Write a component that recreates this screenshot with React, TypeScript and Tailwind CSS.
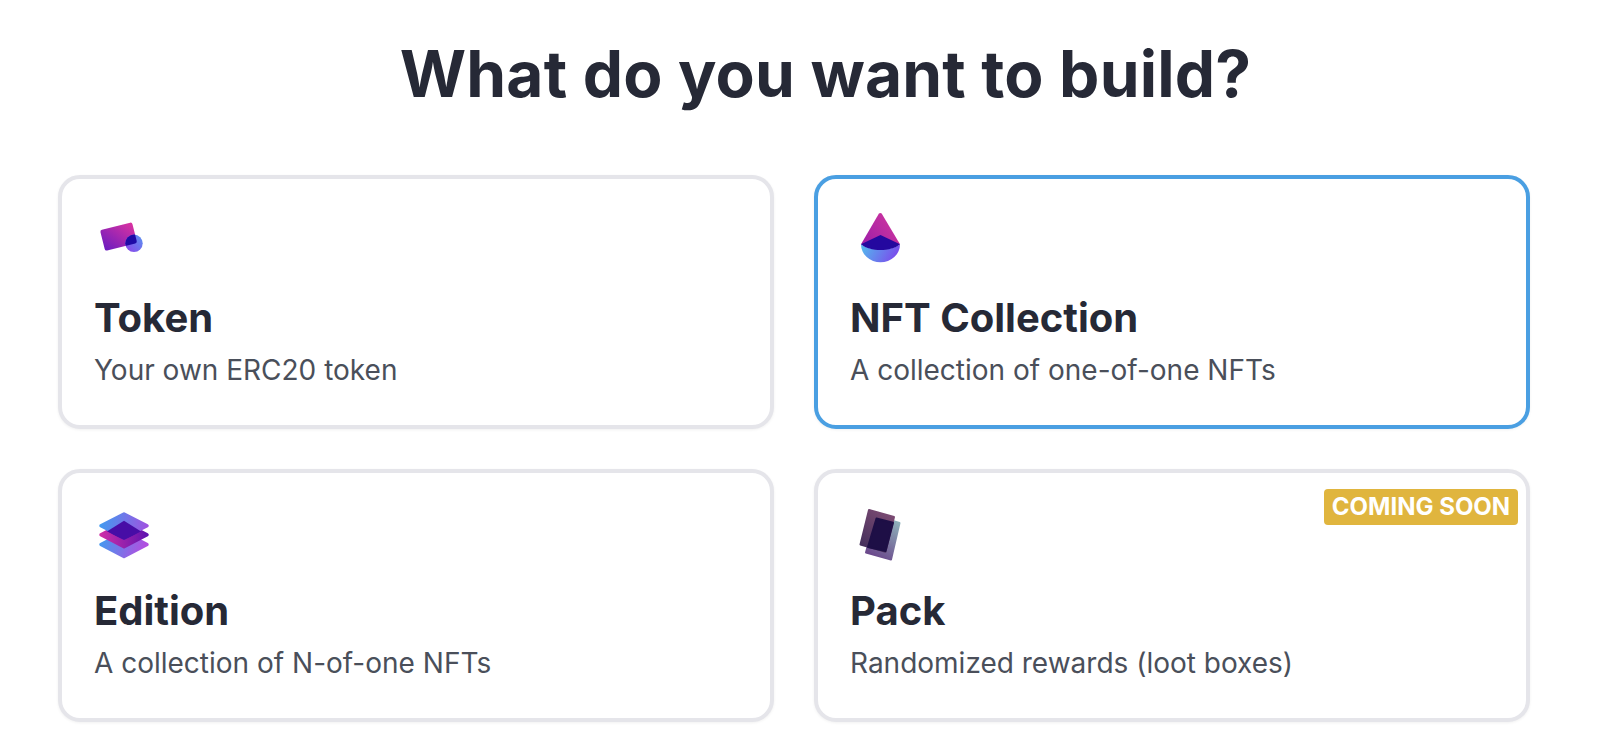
import React from "react";

function TokenIcon() {
  return (
    <svg width="64" height="64" viewBox="0 0 64 64" fill="none">
      <defs>
        <linearGradient id="t1" x1="10" y1="42" x2="40" y2="16" gradientUnits="userSpaceOnUse">
          <stop offset="0" stopColor="#6a1bc0" />
          <stop offset="1" stopColor="#e0349f" />
        </linearGradient>
        <linearGradient id="t2" x1="33" y1="44" x2="48" y2="30" gradientUnits="userSpaceOnUse">
          <stop offset="0" stopColor="#8a48ea" />
          <stop offset="1" stopColor="#5c8ff0" />
        </linearGradient>
        <clipPath id="tc">
          <rect x="8.100" y="18.900" width="33" height="21.400" rx="2" transform="rotate(-14 24.600 29.600)" />
        </clipPath>
      </defs>
      <rect x="8.100" y="18.900" width="33" height="21.400" rx="2" transform="rotate(-14 24.600 29.600)" fill="url(#t1)" />
      <circle cx="40" cy="36.300" r="8.700" fill="url(#t2)" />
      <circle cx="40" cy="36.300" r="8.700" fill="#1f0aa6" clipPath="url(#tc)" />
    </svg>
  );
}

function CollectionIcon() {
  return (
    <svg width="64" height="64" viewBox="0 0 64 64" fill="none">
      <defs>
        <linearGradient id="c1" x1="14" y1="36" x2="42" y2="14" gradientUnits="userSpaceOnUse">
          <stop offset="0" stopColor="#a01fa8" />
          <stop offset="1" stopColor="#c9339f" />
        </linearGradient>
        <linearGradient id="c2" x1="14" y1="38" x2="44" y2="54" gradientUnits="userSpaceOnUse">
          <stop offset="0" stopColor="#55b4ee" />
          <stop offset="1" stopColor="#7a4cec" />
        </linearGradient>
      </defs>
      <path d="M28.800 6.800a1.800 1.800 0 0 1 3 0L50 37.300 30.500 43 11 37.300Z" fill="url(#c1)" />
      <path d="M11 37.300a19.500 18 0 0 0 39 0c-8 7.200-31 7.200-39 0Z" fill="url(#c2)" />
      <path d="M11 37.300 30.500 28 50 37.300c-8 7.700-31 7.700-39 0Z" fill="#24089f" />
    </svg>
  );
}

function EditionIcon() {
  return (
    <svg width="64" height="64" viewBox="0 0 64 64" fill="none">
      <defs>
        <linearGradient id="e1" x1="5" y1="20" x2="56" y2="28" gradientUnits="userSpaceOnUse">
          <stop offset="0" stopColor="#3f9cf0" />
          <stop offset="1" stopColor="#a44fe0" />
        </linearGradient>
        <linearGradient id="e2" x1="5" y1="33" x2="56" y2="33" gradientUnits="userSpaceOnUse">
          <stop offset="0" stopColor="#d12fa8" />
          <stop offset="1" stopColor="#5a12b0" />
        </linearGradient>
        <linearGradient id="e3" x1="5" y1="38" x2="48" y2="54" gradientUnits="userSpaceOnUse">
          <stop offset="0" stopColor="#3f9cf0" />
          <stop offset="1" stopColor="#b24fe0" />
        </linearGradient>
        <clipPath id="ec">
          <polygon points="30,9.700 57,24.700 30,39.700 3,24.700" />
        </clipPath>
      </defs>
      <polygon points="30,31.500 53,43.500 30,55.500 7,43.500" fill="url(#e3)" stroke="url(#e3)" strokeWidth="3.500" strokeLinejoin="round" />
      <polygon points="30,21.700 53,33.700 30,45.700 7,33.700" fill="url(#e2)" stroke="url(#e2)" strokeWidth="3.500" strokeLinejoin="round" />
      <polygon points="30,13 53,24.700 30,36.400 7,24.700" fill="url(#e1)" stroke="url(#e1)" strokeWidth="3.500" strokeLinejoin="round" />
      <polygon points="30,19.700 47.500,30.700 30,39 12.500,30.700" fill="#470da6" clipPath="url(#ec)" />
    </svg>
  );
}

function PackIcon() {
  return (
    <svg width="64" height="64" viewBox="0 0 64 64" fill="none">
      <defs>
        <linearGradient id="p1" x1="48" y1="20" x2="26" y2="56" gradientUnits="userSpaceOnUse">
          <stop offset="0" stopColor="#8fb3bb" />
          <stop offset="1" stopColor="#6b4a8c" />
        </linearGradient>
        <linearGradient id="p2" x1="40" y1="14" x2="14" y2="46" gradientUnits="userSpaceOnUse">
          <stop offset="0" stopColor="#7a4a72" />
          <stop offset="1" stopColor="#46305c" />
        </linearGradient>
      </defs>
      <polygon points="26,15 49.500,22 41,58.500 16,51.500" fill="url(#p1)" stroke="url(#p1)" strokeWidth="2" strokeLinejoin="round" />
      <polygon points="19,9 44,16 35.500,50.700 10.500,43.500" fill="url(#p2)" stroke="url(#p2)" strokeWidth="2" strokeLinejoin="round" />
      <polygon points="26.500,17.500 43,21.800 35.500,50 18,46" fill="#1e0f46" stroke="#1e0f46" strokeWidth="2" strokeLinejoin="round" />
    </svg>
  );
}

function Card({ icon, title, desc, selected, badge }: { icon: React.ReactNode; title: string; desc: string; selected?: boolean; badge?: boolean }) {
  return (
    <div className={`relative h-[253.5px] rounded-[22px] border-[4px] bg-white px-[32px] pt-[28px] shadow-[0_1px_3px_rgba(0,0,0,0.06)] ${selected ? "border-[#4a9fe2]" : "border-[#e5e5ea]"}`}>
      {badge && (
        <div className="absolute right-[8px] top-[16px] flex h-[36px] w-[194px] items-center justify-center rounded-[4px] bg-[#e0b53e] text-[24px] font-bold text-white">
          COMING SOON
        </div>
      )}
      <div className="h-[64px] w-[64px]">{icon}</div>
      <div className="mt-[22.5px] text-[40px] font-bold leading-[48px] text-[#262936]">{title}</div>
      <div className="mt-[10px] text-[28px] leading-[36px] text-[#4a4f5a]">{desc}</div>
    </div>
  );
}

export default function App() {
  return (
    <div className="h-[754px] w-full overflow-hidden bg-white font-['Inter',sans-serif]">
      <h1 className="pl-[45px] pt-[28px] text-center text-[64px] font-bold leading-[92px] tracking-[0.2px] text-[#262936]">What do you want to build?</h1>
      <div className="ml-[58px] mr-[76px] mt-[55px] grid grid-cols-2 gap-[40px]">
        <Card icon={<TokenIcon />} title="Token" desc="Your own ERC20 token" />
        <Card icon={<CollectionIcon />} title="NFT Collection" desc="A collection of one-of-one NFTs" selected />
        <Card icon={<EditionIcon />} title="Edition" desc="A collection of N-of-one NFTs" />
        <Card icon={<PackIcon />} title="Pack" desc="Randomized rewards (loot boxes)" badge />
      </div>
    </div>
  );
}
